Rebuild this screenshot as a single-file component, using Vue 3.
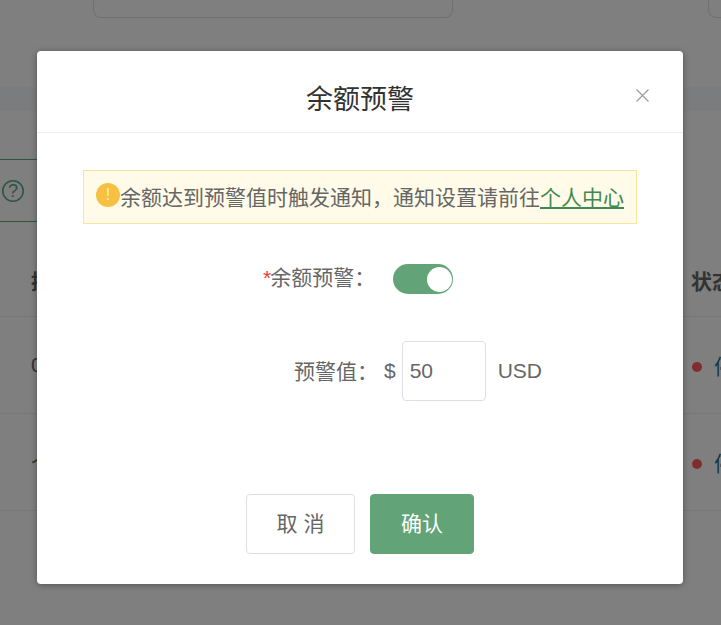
<script setup>
const rows = [{ id: 1, first: '0', status: '停用' }, { id: 2, first: '个', status: '停用' }]
</script>

<template>
  <div class="page">
    <div class="cards">
      <div class="card main-card"></div>
      <div class="card side-card"></div>
    </div>
    <div class="band"></div>
    <div class="toolbar">
      <svg class="help" viewBox="0 0 24 24" width="24" height="24" fill="none">
        <circle cx="12" cy="12" r="10.2" stroke="#5aa98a" stroke-width="1.6" />
        <text x="12" y="18" text-anchor="middle" class="help-mark">?</text>
      </svg>
    </div>
    <div class="table">
      <div class="tr head">
        <span class="cell-left">提</span>
        <span class="cell-right"><b>状态</b></span>
      </div>
      <div v-for="row in rows" :key="row.id" class="tr">
        <span class="cell-left">{{ row.first }}</span>
        <span class="cell-right"><i class="dot"></i><em class="state">{{ row.status }}</em></span>
      </div>
    </div>

    <div class="overlay">
      <div class="modal">
        <header class="modal-head">
          <h2>余额预警</h2>
          <svg class="close" viewBox="0 0 13 13" width="13" height="13" fill="none">
            <path d="M.5.5l12 12M12.5.5l-12 12" stroke="#999" stroke-width="1.1" />
          </svg>
        </header>
        <div class="modal-body">
          <div class="alert">
            <span class="alert-icon">!</span>
            <span class="alert-text">余额达到预警值时触发通知&#xFF0C;通知设置请前往<a class="link">个人中心</a></span>
          </div>
          <div class="form-row row-switch">
            <label class="label"><span class="star">*</span>余额预警&#xFF1A;</label>
            <div class="switch"><span class="knob"></span></div>
          </div>
          <div class="form-row row-value">
            <label class="label">预警值&#xFF1A;</label>
            <span class="unit-before">$</span>
            <div class="input">50</div>
            <span class="unit-after">USD</span>
          </div>
        </div>
        <footer class="modal-foot">
          <button class="btn ghost">取 消</button>
          <button class="btn primary">确认</button>
        </footer>
      </div>
    </div>
  </div>
</template>

<style>
html, body { margin: 0; background: #fff; }
</style>

<style scoped>
.page {
  position: relative;
  width: 721px;
  height: 625px;
  overflow: hidden;
  background: #fff;
  font-family: "Liberation Sans", "Noto Sans CJK SC", sans-serif;
  font-size: 21px;
  color: #666;
}
.cards { display: flex; height: 18px; padding-left: 93px; gap: 255px; }
.card {
  box-sizing: border-box;
  flex: none;
  height: 18px;
  border: 1px solid #dcdfe6;
  border-top: 0;
  border-radius: 0 0 8px 8px;
}
.main-card { width: 360px; }
.side-card { width: 60px; }
.band { height: 24px; margin-top: 69px; background: #f6f8fc; }
.toolbar {
  box-sizing: border-box;
  display: flex;
  align-items: center;
  width: 500px;
  height: 63px;
  margin-top: 48px;
  padding-left: 1px;
  border-top: 1px solid #62a87c;
  border-bottom: 1px solid #62a87c;
}
.help-mark { font-size: 18px; fill: #5aa98a; font-family: "Liberation Sans", sans-serif; }
.tr {
  box-sizing: border-box;
  display: flex;
  align-items: center;
  justify-content: space-between;
  height: 97px;
  border-bottom: 1px solid #ebeef5;
  padding-left: 31px;
}
.tr.head { height: 95px; padding-top: 21px; }
.cell-right { display: flex; align-items: center; width: 29px; white-space: nowrap; }
.head .cell-left { font-weight: 700; }
.head b { margin-left: -1px; }
.dot {
  flex: none;
  width: 10px;
  height: 10px;
  margin-top: 4px;
  margin-right: 12px;
  border-radius: 50%;
  background: #ff5a5a;
}
.state { font-style: normal; color: #2a6d90; }

.overlay {
  position: absolute;
  inset: 0;
  background: rgba(0, 0, 0, 0.5);
}
.modal {
  position: absolute;
  left: 37px;
  top: 51px;
  width: 646px;
  height: 533px;
  display: flex;
  flex-direction: column;
  background: #fff;
  border-radius: 4px;
  box-shadow: 0 1px 6px rgba(0, 0, 0, 0.35);
}
.modal-head {
  box-sizing: border-box;
  position: relative;
  flex: none;
  height: 82px;
  display: flex;
  align-items: center;
  justify-content: center;
  border-bottom: 1px solid #ebeef5;
}
.modal-head h2 {
  margin: 0;
  padding-top: 12px;
  font-size: 27px;
  font-weight: 400;
  color: #333;
}
.close { position: absolute; left: 599px; top: 38px; }
.modal-body { flex: 1; padding: 37px 46px 0; }
.alert {
  box-sizing: border-box;
  display: flex;
  align-items: center;
  height: 54px;
  padding-left: 12px;
  border: 1px solid #fde49b;
  background: #fffbe8;
  white-space: nowrap;
}
.alert-text { margin-bottom: 3px; }
.alert-icon {
  flex: none;
  width: 24px;
  height: 24px;
  margin-top: -4px;
  border-radius: 50%;
  background: #f6c142;
  color: #fdeec4;
  font-size: 16px;
  line-height: 24px;
  text-align: center;
}
.link { color: #3f8a4f; text-decoration: underline; }
.form-row { display: flex; align-items: center; white-space: nowrap; }
.row-switch { height: 30px; margin-top: 40px; padding-left: 180px; }
.label { display: block; margin-bottom: 6px; }
.star { color: #f5392d; margin-right: -1px; }
.switch {
  box-sizing: border-box;
  width: 60px;
  height: 30px;
  margin-left: 18px;
  padding: 0 1.5px;
  display: flex;
  align-items: center;
  justify-content: flex-end;
  border-radius: 15px;
  background: #62a478;
}
.knob { width: 25px; height: 25px; border-radius: 50%; background: #fff; }
.row-value { height: 60px; margin-top: 47px; padding-left: 211px; }
.row-value .label { margin-bottom: 2px; }
.unit-before { margin-left: 6px; }
.input {
  box-sizing: border-box;
  width: 84px;
  height: 60px;
  margin-left: 6px;
  padding-left: 7px;
  line-height: 58px;
  border: 1px solid #dcdfe6;
  border-radius: 4px;
}
.unit-after { margin-left: 12px; }
.modal-foot {
  flex: none;
  display: flex;
  justify-content: center;
  gap: 15px;
  padding-bottom: 30px;
}
.btn {
  box-sizing: border-box;
  height: 60px;
  padding: 0 0 4px;
  border-radius: 4px;
  font: inherit;
}
.ghost { width: 109px; background: #fff; border: 1px solid #dcdfe6; color: #666; }
.primary { width: 104px; background: #62a478; border: 1px solid #62a478; color: #fff; }
</style>
